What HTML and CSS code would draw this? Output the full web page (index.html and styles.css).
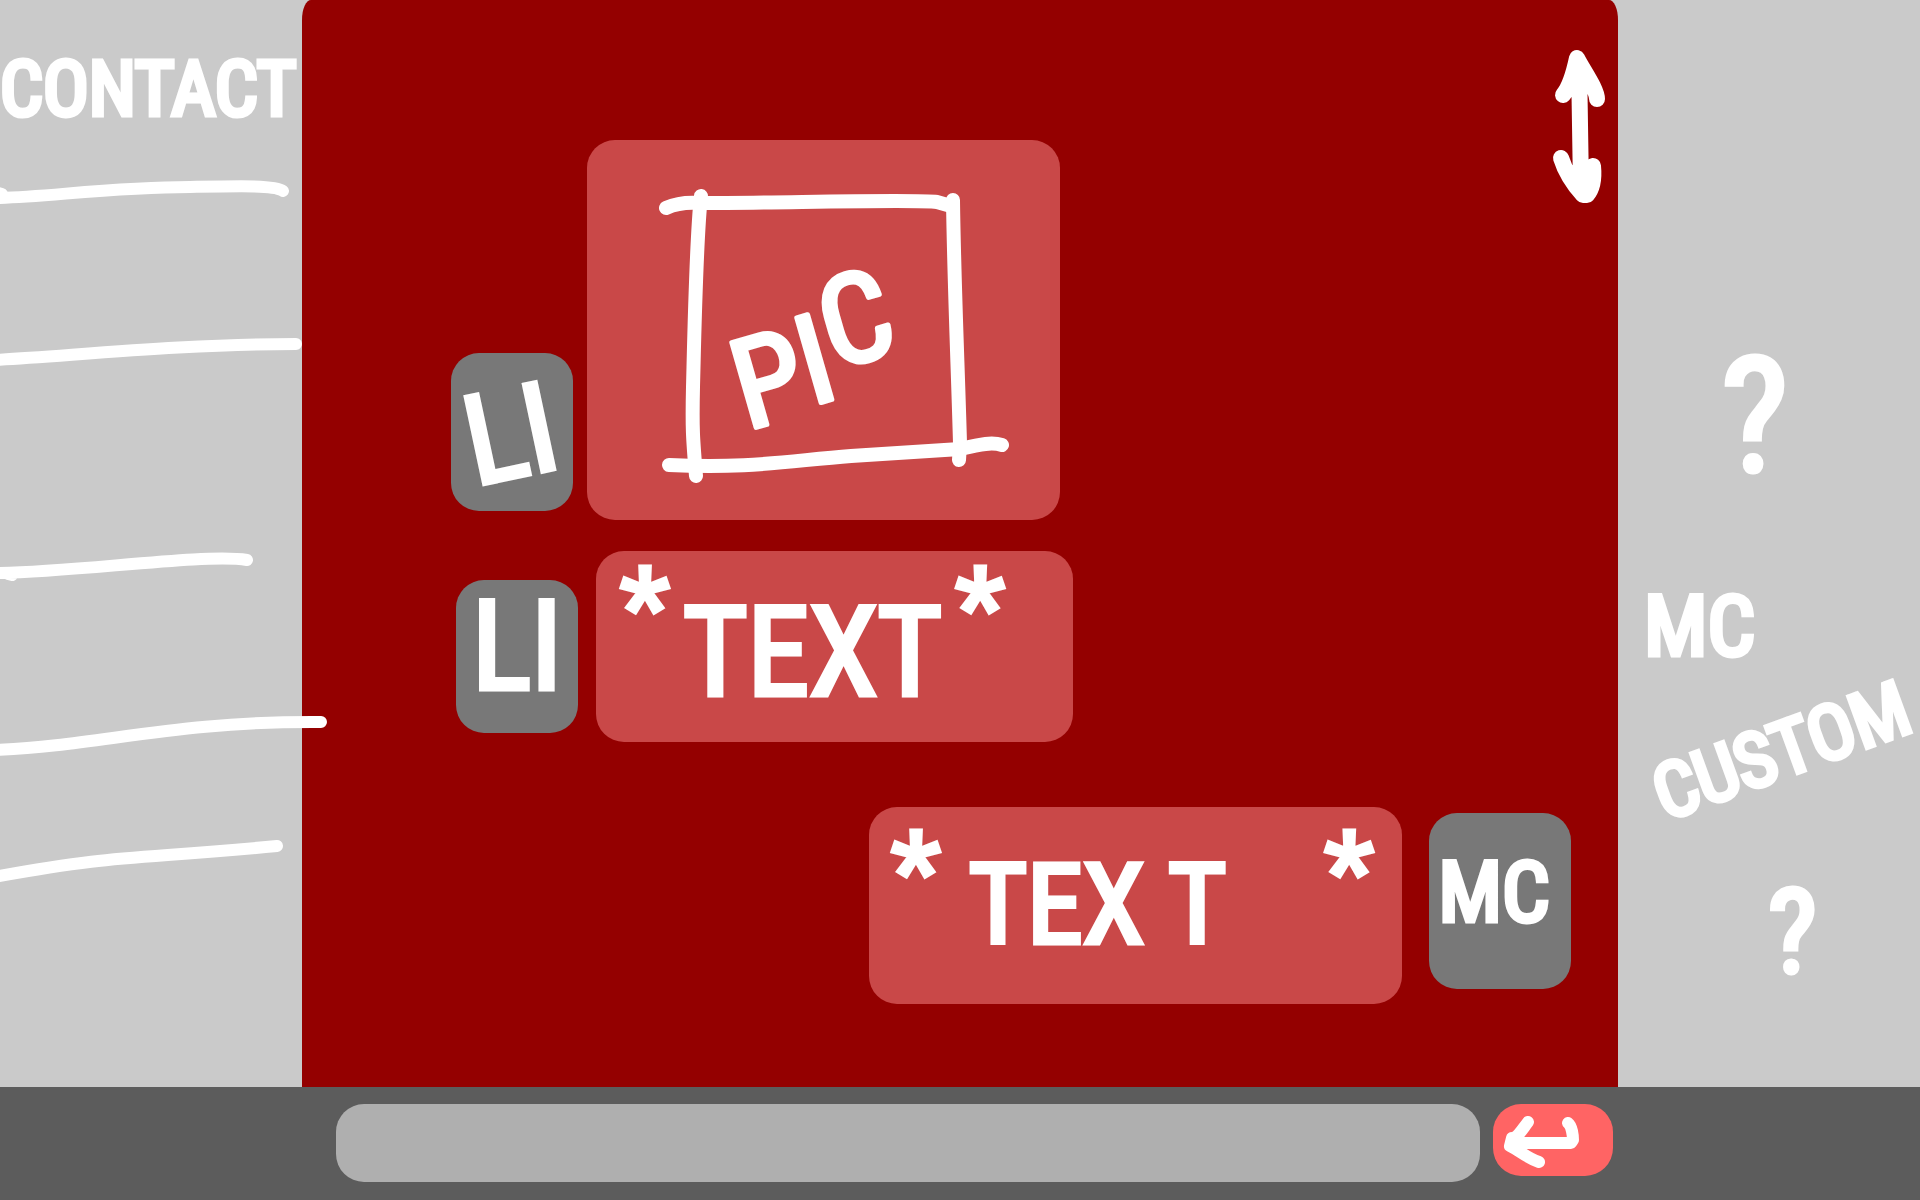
FILE: index.html
```html
<!DOCTYPE html>
<html lang="en">
<head>
<meta charset="utf-8">
<title>Chat</title>
<link rel="stylesheet" href="styles.css">
</head>
<body>
<div class="columns">
  <aside class="contacts">
    <h1 class="hand contacts-title">CONTACT</h1>
    <svg class="contact-lines sketch" width="330" height="720" viewBox="0 0 330 720" aria-hidden="true">
      <path d="M-6 22L2 24M-6 28C40 28 110 17 190 17C240 16 275 15 283 21"/>
      <path d="M-6 190C60 187 180 174 296 174"/>
      <path d="M-6 403C70 403 205 383 247 390M8 404L12 405"/>
      <path d="M-6 580C100 576 170 551 321 552"/>
      <path d="M-6 707C120 684 130 690 277 676"/>
    </svg>
  </aside>

  <main class="chat">
    <svg class="scroll-arrow" width="60" height="160" viewBox="0 0 60 160" aria-hidden="true">
      <path class="fill" d="M27 7L14 46L29 42L46 48ZM14 112L36 148L44 116L30 122Z"/>
      <path d="M13 47C19 40 24 24 27 10C33 22 47 41 47 51M29 14L31 140M11 110C16 126 25 138 33 147L37 147C43 140 44 128 43 118"/>
    </svg>

    <article class="message message-picture">
      <div class="avatar hand"><span class="tilt">LI</span></div>
      <div class="bubble">
        <svg class="picture sketch" viewBox="0 0 473 380" role="img" aria-label="Picture">
          <path d="M79 68C88 64 98 62 112 63C190 63 330 59 350 62L364 66"/>
          <path d="M114 56C109 100 107 210 106 247C105 290 106 300 109 336"/>
          <path d="M366 60C367 140 371 230 373 303L372 320"/>
          <path d="M82 325C160 329 200 321 264 316L373 309C395 304 405 302 415 305"/>
          <text class="picture-label" dy="0 -6 -28" transform="translate(160 290) rotate(-16)">PIC</text>
        </svg>
      </div>
    </article>

    <article class="message message-reply">
      <div class="avatar hand"><span>LI</span></div>
      <div class="bubble text-bubble hand">
        <span class="star">*</span><span class="word">TEXT</span><span class="star">*</span>
      </div>
    </article>

    <article class="message message-own">
      <div class="bubble text-bubble hand">
        <span class="star">*</span><span class="word">TEX T</span><span class="star">*</span>
      </div>
      <div class="avatar hand"><span>MC</span></div>
    </article>
  </main>

  <aside class="custom">
    <p class="hand mark-large">?</p>
    <p class="hand who">MC</p>
    <p class="hand what">CUSTOM</p>
    <p class="hand mark-small">?</p>
  </aside>
</div>

<form class="composer">
  <input class="composer-input" type="text" aria-label="Message">
  <button class="composer-send" type="button" aria-label="Send">
    <svg width="120" height="72" viewBox="0 0 120 72" aria-hidden="true">
      <path d="M75 19C79 22 80 32 80 36L78 39H18M35 18C26 30 24 34 19 34L17 42C26 46 34 54 46 58M20 35L28 39"/>
    </svg>
  </button>
</form>
</body>
</html>
```
FILE: styles.css
```css
* {
  box-sizing: border-box;
}

body {
  margin: 0;
  min-height: 100vh;
  display: flex;
  flex-direction: column;
  background: #cacaca;
  color: #fff;
  font-family: "Roboto Condensed", Roboto, sans-serif;
}

h1,
p {
  margin: 0;
}

.hand {
  font-weight: 400;
  line-height: 1;
  white-space: nowrap;
  -webkit-text-stroke: 5px #fff;
}

.sketch path {
  fill: none;
  stroke: #fff;
  stroke-width: 12px;
  stroke-linecap: round;
  stroke-linejoin: round;
}

.columns {
  flex: 1;
  display: grid;
  grid-template-columns: 302px 1fr 302px;
}

/* Contacts */

.contacts {
  position: relative;
  z-index: 1;
  padding-top: 51px;
}

.contacts-title {
  font-size: 76px;
}

.contact-lines {
  display: block;
  margin-top: 43px;
}

/* Conversation */

.chat {
  position: relative;
  display: flex;
  flex-direction: column;
  padding: 140px 47px 83px 149px;
  background: #940000;
  border-radius: 9px 9px 0 0 / 20px 20px 0 0;
}

.scroll-arrow {
  position: absolute;
  top: 48px;
  right: 8px;
  fill: none;
  stroke: #fff;
  stroke-width: 16px;
  stroke-linecap: round;
  stroke-linejoin: round;
}

.scroll-arrow .fill {
  fill: #fff;
  stroke: none;
}

.message {
  display: flex;
  align-items: flex-end;
}

.message-picture {
  gap: 14px;
}

.message-reply {
  gap: 18px;
  margin: 31px 0 0 5px;
}

.message-own {
  gap: 27px;
  margin-top: 65px;
  justify-content: flex-end;
}

.bubble {
  border-radius: 28px;
  background: #c94848;
}

.message-picture .bubble {
  width: 473px;
}

.picture {
  display: block;
  width: 100%;
}

.picture path {
  stroke-width: 14px;
}

.picture-label {
  fill: #fff;
  stroke: #fff;
  stroke-width: 5px;
  stroke-linejoin: round;
  font-size: 124px;
}

.text-bubble {
  display: flex;
  justify-content: space-between;
  align-items: flex-start;
}

.message-reply .bubble {
  width: 477px;
  height: 191px;
  padding: 20px 68px 0 24px;
}

.message-own .bubble {
  width: 533px;
  height: 197px;
  padding: 28px 28px 0 22px;
}

.star {
  font-family: "Liberation Sans", sans-serif;
  font-size: 128px;
  line-height: 80px;
}

.word {
  padding-top: 14px;
  font-size: 112px;
}

.message-reply .word {
  padding-top: 20px;
  font-size: 124px;
}

.message-own .word {
  margin-right: 70px;
}

.avatar {
  display: flex;
  justify-content: center;
  width: 122px;
  height: 158px;
  margin-bottom: 9px;
  padding-top: 20px;
  border-radius: 28px;
  background: #787878;
  font-size: 124px;
}

.message-reply .avatar {
  height: 153px;
  padding-top: 5px;
}

.message-own .avatar {
  width: 142px;
  height: 176px;
  margin-bottom: 15px;
  padding: 38px 12px 0 0;
  font-size: 84px;
}

.tilt {
  transform: rotate(-12deg);
}

/* Customisation */

.custom {
  display: flex;
  flex-direction: column;
  align-items: flex-start;
  padding-top: 337px;
}

.mark-large {
  margin-left: 103px;
  font-size: 160px;
}

.who {
  margin: 88px 0 0 26px;
  font-size: 84px;
}

.what {
  margin: 44px 0 0 30px;
  font-size: 76px;
  transform: rotate(-20deg);
}

.mark-small {
  margin: 85px 0 0 150px;
  font-size: 116px;
}

/* Composer */

.composer {
  display: flex;
  align-items: flex-start;
  gap: 13px;
  height: 113px;
  padding: 17px 307px 0 336px;
  background: #5c5c5c;
}

.composer-input {
  flex: 1;
  height: 78px;
  padding: 0 28px;
  border: 0;
  border-radius: 28px;
  background: #afafaf;
  color: #fff;
  font: inherit;
  font-size: 32px;
}

.composer-send {
  width: 120px;
  height: 72px;
  padding: 0;
  border: 0;
  border-radius: 28px;
  background: #ff6464;
}

.composer-send svg {
  display: block;
  fill: none;
  stroke: #fff;
  stroke-width: 12px;
  stroke-linecap: round;
  stroke-linejoin: round;
}
```
